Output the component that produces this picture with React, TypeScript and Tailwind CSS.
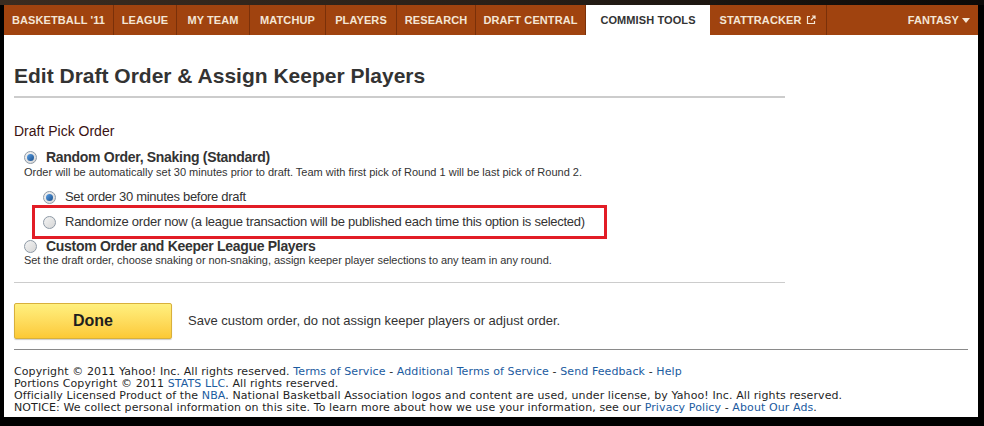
import React from "react";

function Radio({ checked }: { checked?: boolean }) {
  return (
    <span className="inline-flex items-center justify-center w-[13px] h-[13px] rounded-full border border-[#8e9aa6] bg-gradient-to-br from-[#f4f4f4] to-[#d6d6d6] shrink-0">
      {checked ? (
        <span className="w-[7px] h-[7px] rounded-full bg-gradient-to-br from-[#5aa0e6] to-[#1a4f8c]" />
      ) : null}
    </span>
  );
}

const tabs: { label: string; w: string }[] = [
  { label: "BASKETBALL '11", w: "w-[110px]" },
  { label: "LEAGUE", w: "w-[63px]" },
  { label: "MY TEAM", w: "w-[73px]" },
  { label: "MATCHUP", w: "w-[76px]" },
  { label: "PLAYERS", w: "w-[71px]" },
  { label: "RESEARCH", w: "w-[79px]" },
  { label: "DRAFT CENTRAL", w: "w-[110px]" },
];

export default function App() {
  return (
    <div className="w-[984px] h-[426px] bg-black flex flex-col pl-[4px] pr-[6px] pb-[9px] overflow-hidden font-['Liberation_Sans',Arial,sans-serif]">
      <div className="h-[5px] bg-gradient-to-r from-[#3b2c20] via-[#2a2018] to-[#0c0a08] -ml-[4px] -mr-[6px]" />
      <nav className="h-[30px] bg-[#a0430f] flex items-stretch text-[11px] font-bold text-[#f4e6d6] tracking-[0.1px]">
        {tabs.map((t) => (
          <div
            key={t.label}
            className={`${t.w} flex items-center justify-center border-r border-[#7a3009] shrink-0`}
          >
            {t.label}
          </div>
        ))}
        <div className="w-[124px] bg-white text-[#333] flex items-center justify-center shrink-0">
          COMMISH TOOLS
        </div>
        <div className="w-[117px] flex items-center justify-center gap-[5px] border-r border-[#7a3009] shrink-0">
          STATTRACKER
          <svg width="10" height="10" viewBox="0 0 10 10" fill="none" stroke="#f4e6d6" strokeWidth="1.2">
            <path d="M4 1.5H1.5v7h7V6" />
            <path d="M5 5l4-4M6 1h3v3" />
          </svg>
        </div>
        <div className="flex-1 flex items-center justify-end pr-[8px] gap-[3px]">
          FANTASY
          <svg width="8" height="5" viewBox="0 0 8 5">
            <path d="M0 0h8L4 5z" fill="#f4e6d6" />
          </svg>
        </div>
      </nav>
      <main className="flex-1 bg-white pl-[10px] pr-[10px] text-[#333]">
        <div className="w-[771px]">
          <h1 className="pt-[29px] text-[21px] leading-[24px] font-bold text-[#333]">
            Edit Draft Order &amp; Assign Keeper Players
          </h1>
          <div className="mt-[8px] h-[2px] bg-[#cccccc]" />
          <h2 className="mt-[25px] text-[14px] leading-[17px] text-[#3a1212]">Draft Pick Order</h2>

          <div className="mt-[9px] pl-[10px]">
            <div className="flex items-center gap-[9px] h-[16px]">
              <Radio checked />
              <span className="text-[14px] font-bold text-[#333] tracking-[-0.3px]">
                Random Order, Snaking (Standard)
              </span>
            </div>
            <div className="text-[11px] leading-[15px] text-[#333]">
              Order will be automatically set 30 minutes prior to draft. Team with first pick of Round 1 will be last pick of Round 2.
            </div>
            <div className="mt-[9px] pl-[19px] flex items-center gap-[9px] h-[16px]">
              <Radio checked />
              <span className="text-[13px] text-[#333] tracking-[-0.3px]">Set order 30 minutes before draft</span>
            </div>
            <div className="ml-[8px] w-[575px] h-[34px] border-[3px] border-[#e21d26] flex items-center pl-[8px] gap-[9px]">
              <Radio />
              <span className="text-[13px] text-[#333] tracking-[-0.25px]">
                Randomize order now (a league transaction will be published each time this option is selected)
              </span>
            </div>
            <div className="flex items-center gap-[9px] h-[14px]">
              <Radio />
              <span className="text-[14px] font-bold text-[#333] tracking-[-0.3px]">
                Custom Order and Keeper League Players
              </span>
            </div>
            <div className="text-[11px] leading-[15px] text-[#333] tracking-[-0.05px]">
              Set the draft order, choose snaking or non-snaking, assign keeper player selections to any team in any round.
            </div>
          </div>
          <div className="mt-[14px] h-[1px] bg-[#cccccc]" />
          <div className="mt-[20px] flex items-center gap-[16px]">
            <button className="w-[158px] h-[36px] rounded-[2px] border border-[#d8b03c] bg-gradient-to-b from-[#fff07e] to-[#fcc934] text-[16px] font-bold text-[#1e1e1e] shadow-[0_1px_1px_rgba(0,0,0,0.2)]">
              Done
            </button>
            <span className="text-[13px] text-[#333]">
              Save custom order, do not assign keeper players or adjust order.
            </span>
          </div>
        </div>
        <div className="mt-[10px] w-[954px] h-[1px] bg-[#8a8a8a]" />
        <footer className="mt-[16px] text-[11px] leading-[12px] tracking-[0.1px] text-[#1f1f1f] font-['DejaVu_Sans',Verdana,sans-serif]">
          <div>
            Copyright © 2011 Yahoo! Inc. All rights reserved. <span className="text-[#1b5ba0]">Terms of Service</span> -{" "}
            <span className="text-[#1b5ba0]">Additional Terms of Service</span> -{" "}
            <span className="text-[#1b5ba0]">Send Feedback</span> - <span className="text-[#1b5ba0]">Help</span>
          </div>
          <div>
            Portions Copyright © 2011 <span className="text-[#1b5ba0]">STATS LLC</span>. All rights reserved.
          </div>
          <div>
            Officially Licensed Product of the <span className="text-[#1b5ba0]">NBA</span>. National Basketball Association logos and content are used, under license, by Yahoo! Inc. All rights reserved.
          </div>
          <div>
            NOTICE: We collect personal information on this site. To learn more about how we use your information, see our{" "}
            <span className="text-[#1b5ba0]">Privacy Policy</span> - <span className="text-[#1b5ba0]">About Our Ads</span>.
          </div>
        </footer>
      </main>
    </div>
  );
}
